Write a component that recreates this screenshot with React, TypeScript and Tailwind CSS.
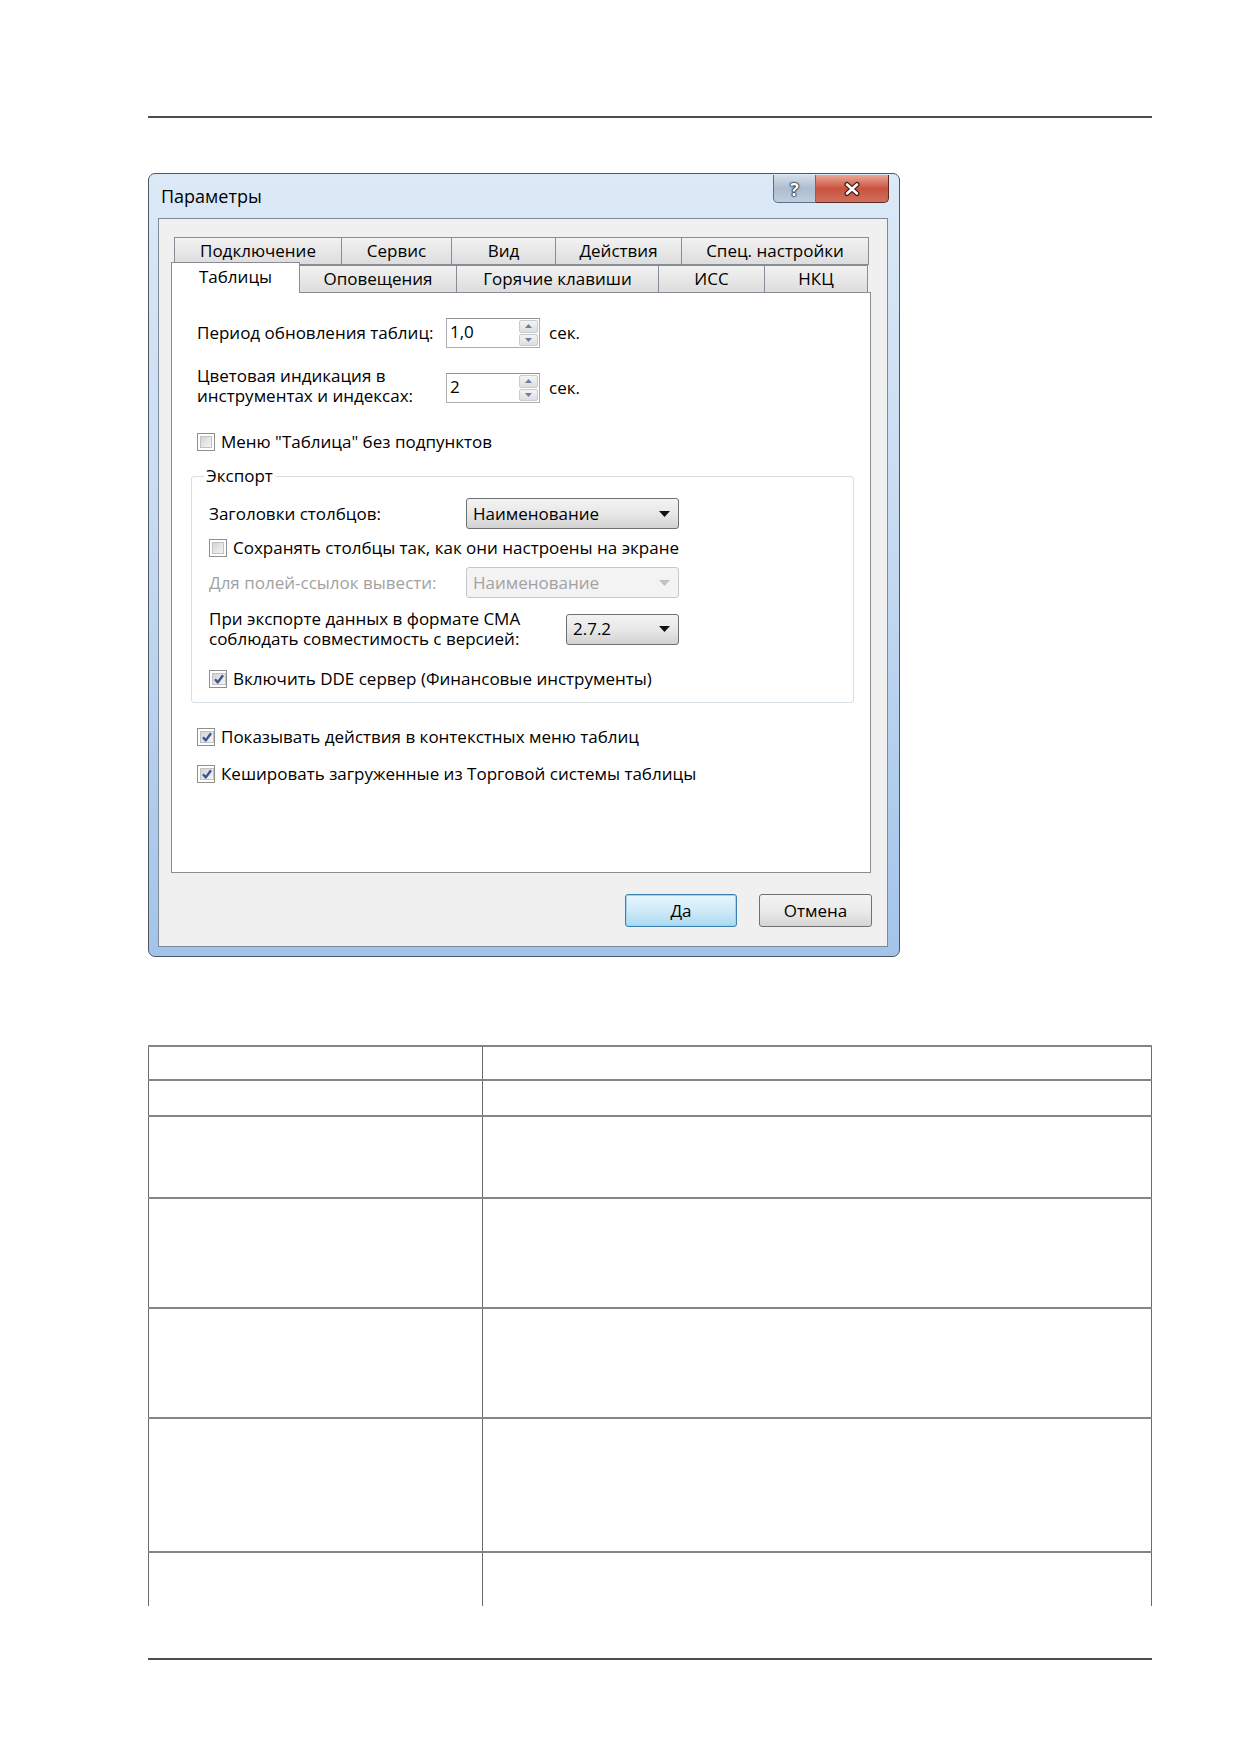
import React from "react";

const font = { fontFamily: '"Open Sans", "Noto Sans", "Liberation Sans", sans-serif' };

function CheckBox({ checked }: { checked?: boolean }) {
  return (
    <span className="w-[18px] h-[18px] shrink-0 border border-[#8e8f8f] bg-white p-[2px] flex">
      <span className="flex-1 bg-gradient-to-br from-[#d4d4d4] to-[#f5f5f5] border border-[#c2c2c2] flex items-center justify-center">
        {checked && (
          <svg width="12" height="12" viewBox="0 0 12 12">
            <path d="M2 6.2 L4.8 9.4 L10 2.2" fill="none" stroke="#3d5493" strokeWidth="2.4" strokeLinejoin="round" />
          </svg>
        )}
      </span>
    </span>
  );
}

function CheckRow({ checked, children }: { checked?: boolean; children: React.ReactNode }) {
  return (
    <div className="flex items-center gap-[6px] h-[20px] leading-[20px]">
      <CheckBox checked={checked} />
      <span>{children}</span>
    </div>
  );
}

function Spinner({ value }: { value: string }) {
  return (
    <div className="w-[94px] h-[30px] border border-[#abadb3] border-t-[#8e9297] bg-white flex items-stretch">
      <span className="flex-1 pl-[3px] leading-[26px]">{value}</span>
      <div className="w-[21px] flex flex-col gap-[1px] p-[1px]">
        {[0, 1].map((i) => (
          <div key={i} className="flex-1 bg-gradient-to-b from-[#f4f4f4] to-[#dedede] border border-[#c9cbce] rounded-[2px] flex items-center justify-center">
            <svg width="7" height="4" viewBox="0 0 7 4">
              <path d={i === 0 ? "M0 4 L3.5 0 L7 4Z" : "M0 0 L3.5 4 L7 0Z"} fill="#6a7fa8" />
            </svg>
          </div>
        ))}
      </div>
    </div>
  );
}

function Combo({ value, width, disabled }: { value: string; width: string; disabled?: boolean }) {
  return (
    <div
      className={
        disabled
          ? `${width} h-[31px] rounded-[3px] border border-[#c5c8cb] bg-[#f3f3f3] flex items-center justify-between pl-[6px] pr-[8px] text-[#a2a2a2]`
          : `${width} h-[31px] rounded-[3px] border border-[#707070] bg-gradient-to-b from-[#f3f3f3] via-[#e8e8e8] to-[#d2d2d2] flex items-center justify-between pl-[6px] pr-[8px]`
      }
    >
      <span className="leading-[22px]">{value}</span>
      <svg width="11" height="6" viewBox="0 0 11 6">
        <path d="M0 0 L11 0 L5.5 6Z" fill={disabled ? "#c2c2c2" : "#111"} />
      </svg>
    </div>
  );
}

function Tab({ label, w, active }: { label: string; w: string; active?: boolean }) {
  if (active) {
    return (
      <div className={`${w} h-[31px] -mb-[1px] relative z-10 bg-white border border-b-0 border-[#898c95] flex items-start justify-center pt-[2px] leading-[24px]`}>
        {label}
      </div>
    );
  }
  return (
    <div className={`${w} h-[28px] border border-[#898c95] -ml-[1px] bg-gradient-to-b from-[#f2f2f2] to-[#dddddd] flex items-center justify-center leading-[24px]`}>
      {label}
    </div>
  );
}

function ParamsDialog() {
  return (
    <div className="w-[752px] h-[784px] rounded-[7px] border border-[#4e5661] bg-gradient-to-b from-[#dce9f7] via-[#c4d9f1] to-[#a3c4ea] flex flex-col text-black text-[17px]">
      {/* caption */}
      <div className="h-[44px] flex items-start justify-between pl-[12px] pr-[10px]">
        <span className="mt-[9px] text-[18px] leading-[26px] text-black">Параметры</span>
        <div className="flex mt-[1px]">
          <div className="w-[43px] h-[28px] rounded-bl-[5px] border border-[#5d6f86] border-t-0 bg-gradient-to-b from-[#d6dfea] via-[#aebdcf] to-[#bfcddd] flex items-center justify-center">
            <span className="font-bold text-[18px] leading-none text-white [text-shadow:0_0_1px_#111a26,0_0_1px_#111a26,0_0_2px_#111a26,0_0_2px_#111a26]">?</span>
          </div>
          <div className="w-[73px] h-[28px] rounded-br-[5px] border border-[#5d2a22] border-t-0 border-l-0 bg-gradient-to-b from-[#e9a796] via-[#c8523e] to-[#d0705e] flex items-center justify-center">
            <svg width="20" height="16" viewBox="0 0 20 16">
              <path d="M5 3.5 L15 12.5 M15 3.5 L5 12.5" stroke="#3b1610" strokeWidth="5" strokeLinecap="round" />
              <path d="M5 3.5 L15 12.5 M15 3.5 L5 12.5" stroke="#fff" strokeWidth="2.6" strokeLinecap="round" />
            </svg>
          </div>
        </div>
      </div>

      {/* client area */}
      <div className="ml-[9px] w-[730px] h-[729px] border border-[#7f8a98] bg-[#f0f0f0] flex flex-col pt-[18px] pl-[12px]">
        <div className="w-[700px] flex flex-col">
          <div className="flex pl-[4px]">
            <Tab label="Подключение" w="w-[168px]" />
            <Tab label="Сервис" w="w-[111px]" />
            <Tab label="Вид" w="w-[105px]" />
            <Tab label="Действия" w="w-[127px]" />
            <Tab label="Спец. настройки" w="w-[188px]" />
          </div>
          <div className="flex items-end -mt-[3px]">
            <Tab label="Таблицы" w="w-[129px]" active />
            <div className="flex -mb-[1px]">
              <Tab label="Оповещения" w="w-[158px]" />
              <Tab label="Горячие клавиши" w="w-[203px]" />
              <Tab label="ИСС" w="w-[107px]" />
              <Tab label="НКЦ" w="w-[104px]" />
            </div>
          </div>

          {/* page "Таблицы" */}
          <div className="h-[581px] bg-white border border-[#898c95] pt-[25px] pl-[19px] pr-[16px] flex flex-col">
            <div className="pl-[6px] flex flex-col">
              <div className="flex items-center h-[30px]">
                <span className="w-[249px] leading-[20px]">Период обновления таблиц:</span>
                <Spinner value="1,0" />
                <span className="ml-[9px] leading-[20px]">сек.</span>
              </div>
              <div className="flex items-start mt-[18px]">
                <span className="w-[249px] leading-[20px]">
                  Цветовая индикация в<br />
                  инструментах и индексах:
                </span>
                <div className="mt-[7px] flex items-center">
                  <Spinner value="2" />
                  <span className="ml-[9px] leading-[20px]">сек.</span>
                </div>
              </div>
              <div className="mt-[26px]">
                <CheckRow>Меню "Таблица" без подпунктов</CheckRow>
              </div>
            </div>

            <fieldset className="mt-[14px] border border-[#d5dfe5] rounded-[3px] pl-[17px] pr-[10px] pt-[12px] pb-[13px] flex flex-col">
              <legend className="-ml-[5px] px-[2px] leading-[20px]">Экспорт</legend>
              <div className="flex items-center">
                <span className="w-[257px] leading-[20px]">Заголовки столбцов:</span>
                <Combo value="Наименование" width="w-[213px]" />
              </div>
              <div className="mt-[9px]">
                <CheckRow>Сохранять столбцы так, как они настроены на экране</CheckRow>
              </div>
              <div className="mt-[9px] flex items-center">
                <span className="w-[257px] leading-[20px] text-[#a2a2a2]">Для полей-ссылок вывести:</span>
                <Combo value="Наименование" width="w-[213px]" disabled />
              </div>
              <div className="mt-[11px] flex items-center">
                <span className="w-[357px] leading-[20px]">
                  При экспорте данных в формате СМА<br />
                  соблюдать совместимость с версией:
                </span>
                <Combo value="2.7.2" width="w-[113px]" />
              </div>
              <div className="mt-[20px]">
                <CheckRow checked>Включить DDE сервер (Финансовые инструменты)</CheckRow>
              </div>
            </fieldset>

            <div className="pl-[6px] flex flex-col">
              <div className="mt-[24px]">
                <CheckRow checked>Показывать действия в контекстных меню таблиц</CheckRow>
              </div>
              <div className="mt-[17px]">
                <CheckRow checked>Кешировать загруженные из Торговой системы таблицы</CheckRow>
              </div>
            </div>
          </div>
        </div>

        <div className="mt-[21px] w-[701px] flex justify-end gap-[22px]">
          <button className="w-[112px] h-[33px] rounded-[3px] border border-[#3c7fb1] bg-gradient-to-b from-[#e8f6fd] via-[#cfeaf8] to-[#a9d9f2] shadow-[inset_0_0_0_1px_#9fd4f1]">
            Да
          </button>
          <button className="w-[113px] h-[33px] rounded-[3px] border border-[#707070] bg-gradient-to-b from-[#f2f2f2] via-[#ebebeb] to-[#d5d5d5]">
            Отмена
          </button>
        </div>
      </div>
    </div>
  );
}

// empty description grid below the screenshot
const rows = [34, 36, 82, 110, 110, 134];

function DescTable() {
  return (
    <div className="w-[1004px] flex flex-col">
      {rows.map((h, i) => (
        <div key={i} style={{ height: h }} className="flex border-t-2 border-[#858585]">
          <div className="w-[335px] border-l border-r border-[#6b6b6b]" />
          <div className="flex-1 border-r border-[#6b6b6b]" />
        </div>
      ))}
      <div className="h-[55px] flex border-t-2 border-[#858585]">
        <div className="w-[335px] border-l border-r border-[#6b6b6b]" />
        <div className="flex-1 border-r border-[#6b6b6b]" />
      </div>
    </div>
  );
}

export default function App() {
  return (
    <div className="w-[1240px] h-[1754px] bg-white flex flex-col pl-[148px]" style={font}>
      <div className="mt-[116px] w-[1004px] h-[2px] bg-[#4d4d4d]" />
      <div className="mt-[55px]">
        <ParamsDialog />
      </div>
      <div className="mt-[88px]">
        <DescTable />
      </div>
      <div className="mt-[52px] w-[1004px] h-[2px] bg-[#4d4d4d]" />
    </div>
  );
}
